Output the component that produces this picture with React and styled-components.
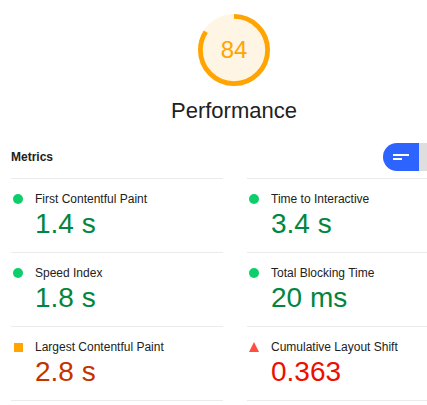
import React from "react";
import styled, { createGlobalStyle, css } from "styled-components";

const GlobalStyle = createGlobalStyle`
  html, body {
    margin: 0;
    padding: 0;
    overflow: hidden;
    background: #ffffff;
  }
  body {
    font-family: "Liberation Sans", Arial, sans-serif;
    color: #212121;
  }
`;

const Page = styled.div`
  width: 448px;
  margin-left: 11px;
  padding-top: 14px;
`;

const Summary = styled.div`
  display: flex;
  flex-direction: column;
  align-items: center;
  padding-right: 2px;
`;

const GaugeWrap = styled.div`
  position: relative;
  width: 72px;
  height: 72px;
`;

const GaugeSvg = styled.svg`
  display: block;
  width: 72px;
  height: 72px;
`;

const Score = styled.div`
  position: absolute;
  inset: 0;
  display: flex;
  align-items: center;
  justify-content: center;
  font-size: 24px;
  color: #ffa400;
`;

const CategoryTitle = styled.div`
  margin-top: 11px;
  font-size: 22px;
  line-height: 28px;
  color: #212121;
`;

const Header = styled.div`
  margin-top: 18px;
  padding-bottom: 7px;
  display: flex;
  align-items: center;
  justify-content: space-between;
`;

const HeaderTitle = styled.div`
  font-size: 12px;
  font-weight: bold;
  line-height: 28px;
  color: #212121;
`;

const Toggle = styled.div`
  display: flex;
  margin-right: 4px;
`;

const ToggleButton = styled.div`
  width: 36px;
  height: 28px;
  display: flex;
  align-items: center;
  justify-content: center;
  background: ${(p) => (p.$active ? "#2d63ff" : "#dedede")};
  border-radius: ${(p) => (p.$side === "left" ? "14px 0 0 14px" : "0 14px 14px 0")};
`;

const Grid = styled.div`
  display: grid;
  grid-template-columns: 212px 212px;
  column-gap: 24px;
`;

const Metric = styled.div`
  border-top: 1px solid #ebebeb;
  padding: 11px 0 14px;
  ${(p) =>
    p.$last &&
    css`
      border-bottom: 1px solid #ebebeb;
    `}
`;

const TitleRow = styled.div`
  display: flex;
  align-items: center;
  height: 18px;
`;

const IconBox = styled.div`
  width: 14px;
  margin-right: 10px;
  display: flex;
  align-items: center;
  justify-content: center;
`;

const iconShapes = {
  pass: css`
    width: 10px;
    height: 10px;
    border-radius: 50%;
    background: #0cce6b;
  `,
  average: css`
    width: 9px;
    height: 9px;
    background: #ffa400;
  `,
  fail: css`
    width: 10px;
    height: 10px;
    background: #ff4e42;
    clip-path: polygon(50% 0, 100% 100%, 0 100%);
  `,
};

const Icon = styled.span`
  display: block;
  ${(p) => iconShapes[p.$rating]}
`;

const Label = styled.div`
  font-size: 12px;
  line-height: 18px;
  color: #212121;
`;

const valueColors = {
  pass: "#018642",
  average: "#c33300",
  fail: "#eb0f00",
};

const Value = styled.div`
  margin-top: 2px;
  padding-left: 24px;
  font-size: 28px;
  line-height: 28px;
  color: ${(p) => valueColors[p.$rating]};
`;

const metrics = [
  { label: "First Contentful Paint", value: "1.4 s", rating: "pass" },
  { label: "Time to Interactive", value: "3.4 s", rating: "pass" },
  { label: "Speed Index", value: "1.8 s", rating: "pass" },
  { label: "Total Blocking Time", value: "20 ms", rating: "pass" },
  { label: "Largest Contentful Paint", value: "2.8 s", rating: "average" },
  { label: "Cumulative Layout Shift", value: "0.363", rating: "fail" },
];

function Gauge({ score }) {
  const r = 56;
  const c = 2 * Math.PI * r;
  return (
    <GaugeWrap>
      <GaugeSvg viewBox="0 0 120 120">
        <circle cx="60" cy="60" r={r} fill="#ffa400" stroke="#ffa400" strokeWidth="8" opacity="0.1" />
        <circle
          cx="60"
          cy="60"
          r={r}
          fill="none"
          stroke="#ffa400"
          strokeWidth="8"
          strokeDasharray={`${(score / 100) * c} ${c}`}
          transform="rotate(-90 60 60)"
        />
      </GaugeSvg>
      <Score>{score}</Score>
    </GaugeWrap>
  );
}

function ListIcon() {
  return (
    <svg width="16" height="8" viewBox="0 0 16 8">
      <rect x="0" y="1" width="16" height="2" fill="#ffffff" />
      <rect x="0" y="5" width="9" height="2" fill="#ffffff" />
    </svg>
  );
}

export default function App() {
  return (
    <>
      <GlobalStyle />
      <Page>
        <Summary>
          <Gauge score={84} />
          <CategoryTitle>Performance</CategoryTitle>
        </Summary>
        <Header>
          <HeaderTitle>Metrics</HeaderTitle>
          <Toggle>
            <ToggleButton $active $side="left">
              <ListIcon />
            </ToggleButton>
            <ToggleButton $side="right" />
          </Toggle>
        </Header>
        <Grid>
          {metrics.map((m, i) => (
            <Metric key={m.label} $last={i >= metrics.length - 2}>
              <TitleRow>
                <IconBox>
                  <Icon $rating={m.rating} />
                </IconBox>
                <Label>{m.label}</Label>
              </TitleRow>
              <Value $rating={m.rating}>{m.value}</Value>
            </Metric>
          ))}
        </Grid>
      </Page>
    </>
  );
}
